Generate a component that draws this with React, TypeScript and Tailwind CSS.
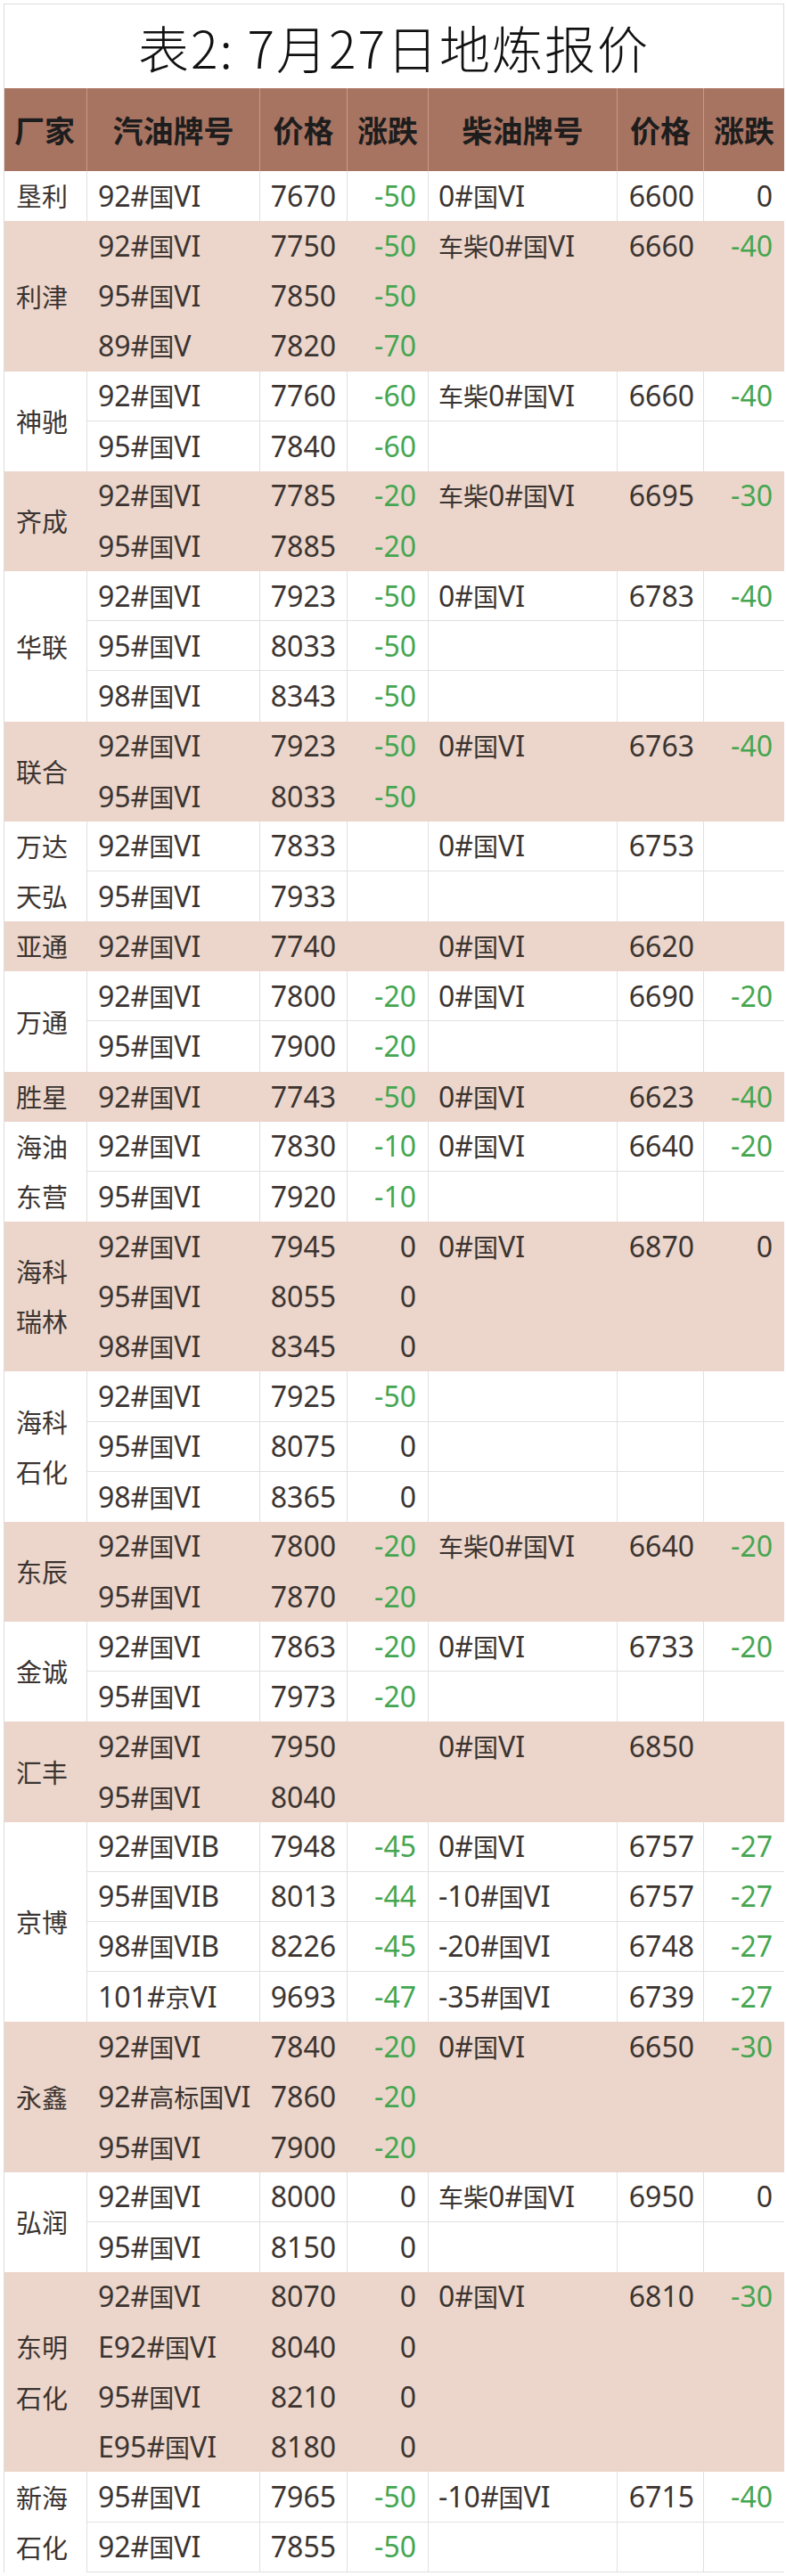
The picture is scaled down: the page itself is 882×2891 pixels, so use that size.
import React from 'react';

type Row = [string, string, string, string, string, string];

interface Group {
  name: string[];
  pink: boolean;
  rows: Row[];
}

const groups: Group[] = [
  { name: ['垦利'], pink: false, rows: [['92#国VI', '7670', '-50', '0#国VI', '6600', '0']] },
  {
    name: ['利津'],
    pink: true,
    rows: [
      ['92#国VI', '7750', '-50', '车柴0#国VI', '6660', '-40'],
      ['95#国VI', '7850', '-50', '', '', ''],
      ['89#国V', '7820', '-70', '', '', ''],
    ],
  },
  {
    name: ['神驰'],
    pink: false,
    rows: [
      ['92#国VI', '7760', '-60', '车柴0#国VI', '6660', '-40'],
      ['95#国VI', '7840', '-60', '', '', ''],
    ],
  },
  {
    name: ['齐成'],
    pink: true,
    rows: [
      ['92#国VI', '7785', '-20', '车柴0#国VI', '6695', '-30'],
      ['95#国VI', '7885', '-20', '', '', ''],
    ],
  },
  {
    name: ['华联'],
    pink: false,
    rows: [
      ['92#国VI', '7923', '-50', '0#国VI', '6783', '-40'],
      ['95#国VI', '8033', '-50', '', '', ''],
      ['98#国VI', '8343', '-50', '', '', ''],
    ],
  },
  {
    name: ['联合'],
    pink: true,
    rows: [
      ['92#国VI', '7923', '-50', '0#国VI', '6763', '-40'],
      ['95#国VI', '8033', '-50', '', '', ''],
    ],
  },
  {
    name: ['万达', '天弘'],
    pink: false,
    rows: [
      ['92#国VI', '7833', '', '0#国VI', '6753', ''],
      ['95#国VI', '7933', '', '', '', ''],
    ],
  },
  { name: ['亚通'], pink: true, rows: [['92#国VI', '7740', '', '0#国VI', '6620', '']] },
  {
    name: ['万通'],
    pink: false,
    rows: [
      ['92#国VI', '7800', '-20', '0#国VI', '6690', '-20'],
      ['95#国VI', '7900', '-20', '', '', ''],
    ],
  },
  { name: ['胜星'], pink: true, rows: [['92#国VI', '7743', '-50', '0#国VI', '6623', '-40']] },
  {
    name: ['海油', '东营'],
    pink: false,
    rows: [
      ['92#国VI', '7830', '-10', '0#国VI', '6640', '-20'],
      ['95#国VI', '7920', '-10', '', '', ''],
    ],
  },
  {
    name: ['海科', '瑞林'],
    pink: true,
    rows: [
      ['92#国VI', '7945', '0', '0#国VI', '6870', '0'],
      ['95#国VI', '8055', '0', '', '', ''],
      ['98#国VI', '8345', '0', '', '', ''],
    ],
  },
  {
    name: ['海科', '石化'],
    pink: false,
    rows: [
      ['92#国VI', '7925', '-50', '', '', ''],
      ['95#国VI', '8075', '0', '', '', ''],
      ['98#国VI', '8365', '0', '', '', ''],
    ],
  },
  {
    name: ['东辰'],
    pink: true,
    rows: [
      ['92#国VI', '7800', '-20', '车柴0#国VI', '6640', '-20'],
      ['95#国VI', '7870', '-20', '', '', ''],
    ],
  },
  {
    name: ['金诚'],
    pink: false,
    rows: [
      ['92#国VI', '7863', '-20', '0#国VI', '6733', '-20'],
      ['95#国VI', '7973', '-20', '', '', ''],
    ],
  },
  {
    name: ['汇丰'],
    pink: true,
    rows: [
      ['92#国VI', '7950', '', '0#国VI', '6850', ''],
      ['95#国VI', '8040', '', '', '', ''],
    ],
  },
  {
    name: ['京博'],
    pink: false,
    rows: [
      ['92#国VIB', '7948', '-45', '0#国VI', '6757', '-27'],
      ['95#国VIB', '8013', '-44', '-10#国VI', '6757', '-27'],
      ['98#国VIB', '8226', '-45', '-20#国VI', '6748', '-27'],
      ['101#京VI', '9693', '-47', '-35#国VI', '6739', '-27'],
    ],
  },
  {
    name: ['永鑫'],
    pink: true,
    rows: [
      ['92#国VI', '7840', '-20', '0#国VI', '6650', '-30'],
      ['92#高标国VI', '7860', '-20', '', '', ''],
      ['95#国VI', '7900', '-20', '', '', ''],
    ],
  },
  {
    name: ['弘润'],
    pink: false,
    rows: [
      ['92#国VI', '8000', '0', '车柴0#国VI', '6950', '0'],
      ['95#国VI', '8150', '0', '', '', ''],
    ],
  },
  {
    name: ['东明', '石化'],
    pink: true,
    rows: [
      ['92#国VI', '8070', '0', '0#国VI', '6810', '-30'],
      ['E92#国VI', '8040', '0', '', '', ''],
      ['95#国VI', '8210', '0', '', '', ''],
      ['E95#国VI', '8180', '0', '', '', ''],
    ],
  },
  {
    name: ['新海', '石化'],
    pink: false,
    rows: [
      ['95#国VI', '7965', '-50', '-10#国VI', '6715', '-40'],
      ['92#国VI', '7855', '-50', '', '', ''],
    ],
  },
];

// CJK runs are drawn a bit smaller than the latin digits, like in the picture
function Mixed({ s }: { s: string }) {
  const parts = s.match(/[\u4e00-\u9fff]+|[^\u4e00-\u9fff]+/g) || [];
  return (
    <>
      {parts.map((p, i) =>
        /[\u4e00-\u9fff]/.test(p) ? (
          <span key={i} className="text-[28px] font-['Noto_Sans_CJK_SC',sans-serif]">
            {p}
          </span>
        ) : (
          <span key={i} className="text-[32px] font-['Noto_Sans','Noto_Sans_CJK_SC',sans-serif]">
            {p}
          </span>
        )
      )}
    </>
  );
}

function Change({ v }: { v: string }) {
  const neg = v.startsWith('-');
  return (
    <span
      className={
        neg
          ? "text-[32px] font-['Noto_Sans',sans-serif] text-[#45a651]"
          : "text-[32px] font-['Noto_Sans',sans-serif] text-[#3b3431]"
      }
    >
      {v}
    </span>
  );
}

function GroupBlock({ g, last }: { g: Group; last: boolean }) {
  const line = g.pink ? 'border-[#ecd6cb]' : 'border-[#e2e0df]';
  return (
    <div className={g.pink ? 'flex bg-[#ecd6cb]' : 'flex bg-white'}>
      <div
        className={`w-[93px] shrink-0 border-r ${line} flex flex-col justify-center pl-[13px] text-[29px] font-['Noto_Sans_CJK_SC',sans-serif] text-[#3b3431]`}
      >
        {g.name.map((n) => (
          <div key={n} className="h-[56.15px] flex items-center">
            {n}
          </div>
        ))}
      </div>
      <div className="flex flex-col">
        {g.rows.map((r, i) => {
          const bottom = i < g.rows.length - 1 || last;
          return (
            <div
              key={i}
              className={`h-[56.15px] flex text-[#3b3431] leading-none ${bottom ? `border-b ${line}` : ''}`}
            >
              <div className={`w-[194px] border-r ${line} flex items-center pl-[12px]`}>
                <Mixed s={r[0]} />
              </div>
              <div className={`w-[98px] border-r ${line} flex items-center justify-end pr-[12px]`}>
                <Mixed s={r[1]} />
              </div>
              <div className={`w-[91px] border-r ${line} flex items-center justify-end pr-[13px]`}>
                <Change v={r[2]} />
              </div>
              <div className={`w-[212px] border-r ${line} flex items-center pl-[11px]`}>
                <Mixed s={r[3]} />
              </div>
              <div className={`w-[97px] border-r ${line} flex items-center justify-end pr-[10px]`}>
                <Mixed s={r[4]} />
              </div>
              <div className="w-[90px] flex items-center justify-end pr-[13px]">
                <Change v={r[5]} />
              </div>
            </div>
          );
        })}
      </div>
    </div>
  );
}

export default function App() {
  const heads = ['汽油牌号', '价格', '涨跌', '柴油牌号', '价格', '涨跌'];
  const widths = ['w-[194px]', 'w-[98px]', 'w-[91px]', 'w-[212px]', 'w-[97px]', 'w-[90px]'];
  return (
    <div className="w-[882px] bg-white pt-[4px] pl-[4px] pb-[4px]">
      <div className="w-[876px] border-l border-[#dcdcdc]">
        <div className="h-[95px] border-t border-r border-[#dcdcdc] flex items-center justify-center">
          <h1 className="text-[57px] font-light text-[#111] leading-none font-['Noto_Sans_CJK_SC',sans-serif] tracking-[2px]">
            表2: 7月27日地炼报价
          </h1>
        </div>
        <div className="flex h-[93px] bg-[#a87462] text-[#1d1d1d] font-bold text-[34px] font-['Noto_Sans_CJK_SC',sans-serif]">
          <div className="w-[93px] shrink-0 border-r border-[#c99a88] flex items-center pl-[11px]">厂家</div>
          {heads.map((h, i) => (
            <div
              key={i}
              className={`${widths[i]} ${i < 5 ? 'border-r border-[#c99a88]' : ''} flex items-center justify-center`}
            >
              {h}
            </div>
          ))}
        </div>
        {groups.map((g, i) => (
          <GroupBlock key={i} g={g} last={i === groups.length - 1} />
        ))}
      </div>
    </div>
  );
}
